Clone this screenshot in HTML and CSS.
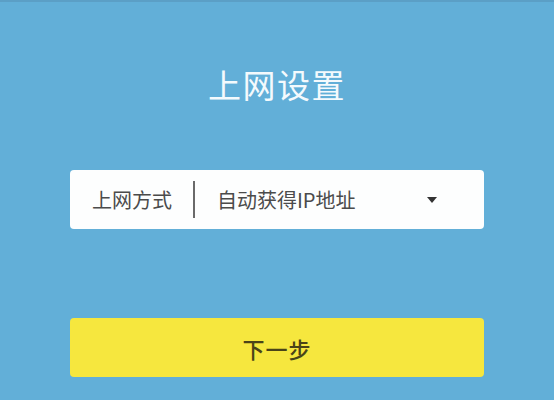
FILE: index.html
```html
<!DOCTYPE html>
<html lang="zh-CN">
<head>
<meta charset="utf-8">
<title>上网设置</title>
<link rel="stylesheet" href="styles.css">
</head>
<body>
<main class="page">
  <h1 class="title">上网设置</h1>
  <div class="field">
    <span class="field-label">上网方式</span>
    <span class="field-divider"></span>
    <span class="field-value">自动获得IP地址</span>
    <span class="field-caret"></span>
  </div>
  <button class="next-btn" type="button">下一步</button>
</main>
</body>
</html>
```
FILE: styles.css
```css
html, body {
  margin: 0;
  padding: 0;
  height: 100%;
}

body {
  background: #62afd8;
  border-top: 2px solid #5b9fc6;
  box-sizing: border-box;
  font-family: "Noto Sans CJK SC", "Noto Sans", sans-serif;
}

.page {
  display: flex;
  flex-direction: column;
  padding: 0 70px;
}

.title {
  margin: 60px 0 0;
  text-align: center;
  color: #f4fafd;
  font-size: 33px;
  font-weight: 400;
  line-height: 44px;
  letter-spacing: 1.5px;
}

.field {
  margin-top: 64px;
  height: 59px;
  background: #fdfefe;
  border-radius: 4px;
  display: flex;
  align-items: center;
  padding: 0 0 0 22px;
  color: #4b4b4b;
  font-size: 20px;
}

.field-label {
  line-height: 1;
}

.field-divider {
  width: 2px;
  height: 37px;
  background: #6a6a6a;
  margin: 0 22px 0 21px;
}

.field-value {
  flex: 1;
  line-height: 1;
}

.field-caret {
  width: 0;
  height: 0;
  border-left: 5px solid transparent;
  border-right: 5px solid transparent;
  border-top: 6px solid #333;
  margin-right: 47px;
}

.next-btn {
  margin-top: 89px;
  height: 59px;
  border: none;
  border-radius: 4px;
  background: #f6e73e;
  color: #4a4418;
  font-family: inherit;
  font-size: 22px;
  font-weight: 500;
  letter-spacing: 1px;
  padding: 0;
}
```
